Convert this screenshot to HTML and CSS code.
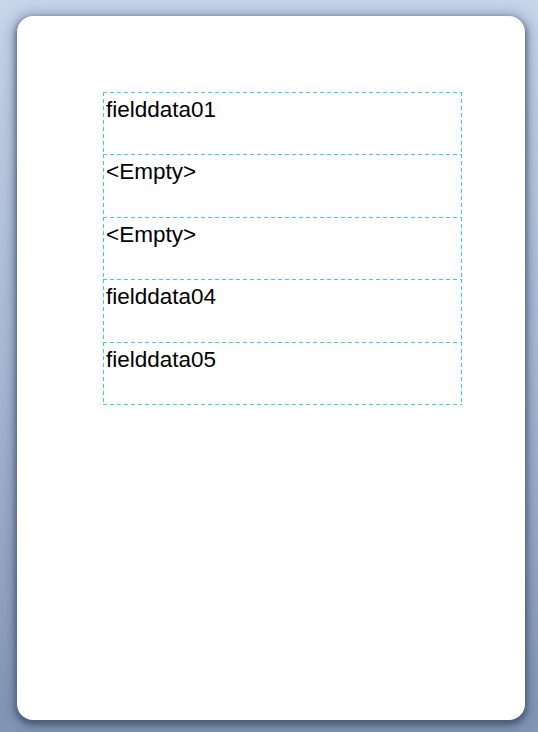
FILE: index.html
```html
<!DOCTYPE html>
<html>
<head>
<meta charset="utf-8">
<link rel="stylesheet" href="styles.css">
</head>
<body>
<div class="page">
  <div class="card">
    <div class="fields">
      <div class="row">fielddata01</div>
      <div class="row">&lt;Empty&gt;</div>
      <div class="row">&lt;Empty&gt;</div>
      <div class="row">fielddata04</div>
      <div class="row last">fielddata05</div>
    </div>
  </div>
</div>
</body>
</html>
```
FILE: styles.css
```css
html, body {
  margin: 0;
  padding: 0;
  height: 100%;
}
body {
  background: linear-gradient(to bottom, #c8d5ea 0%, #a9b9d3 50%, #8195b4 100%);
  font-family: "Liberation Sans", Arial, sans-serif;
  overflow: hidden;
}
.page {
  padding: 16px 13px 12px 17px;
  box-sizing: border-box;
  height: 100%;
}
.card {
  width: 508px;
  height: 704px;
  background: #ffffff;
  border-radius: 16px;
  box-shadow: 0 3px 5px 2px rgba(55, 70, 100, 0.6), 0 2px 14px 5px rgba(70, 85, 115, 0.35);
  padding: 76px 0 0 86px;
  box-sizing: border-box;
}
.fields {
  width: 359px;
  display: flex;
  flex-direction: column;
}
.row {
  height: 62px;
  box-sizing: border-box;
  padding: 5px 0 0 3px;
  font-size: 22.5px;
  line-height: 25px;
  color: #000;
  background:
    repeating-linear-gradient(to right, #3fc8f6 0 4px, transparent 4px 7px) left top / 100% 1px no-repeat,
    repeating-linear-gradient(to bottom, #3fc8f6 0 4px, transparent 4px 7px) left top / 1px 100% no-repeat,
    repeating-linear-gradient(to bottom, #3fc8f6 0 4px, transparent 4px 7px) right top / 1px 100% no-repeat;
}
.row:nth-child(even) {
  height: 63px;
}
.row.last {
  height: 63px;
  background:
    repeating-linear-gradient(to right, #3fc8f6 0 4px, transparent 4px 7px) left top / 100% 1px no-repeat,
    repeating-linear-gradient(to right, #3fc8f6 0 4px, transparent 4px 7px) left bottom / 100% 1px no-repeat,
    repeating-linear-gradient(to bottom, #3fc8f6 0 4px, transparent 4px 7px) left top / 1px 100% no-repeat,
    repeating-linear-gradient(to bottom, #3fc8f6 0 4px, transparent 4px 7px) right top / 1px 100% no-repeat;
}
```
